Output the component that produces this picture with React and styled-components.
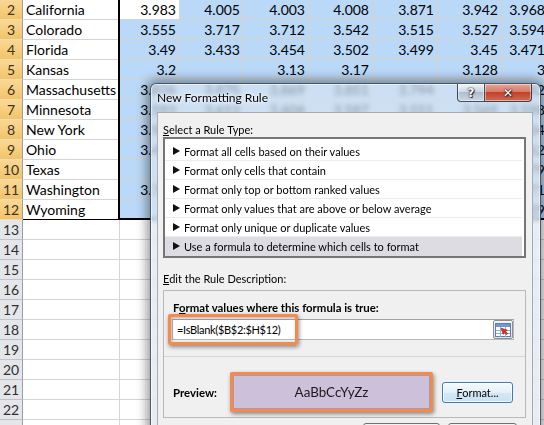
import React from 'react';
import styled, { createGlobalStyle } from 'styled-components';

const GlobalStyle = createGlobalStyle`
  html, body { margin: 0; padding: 0; background: #fff; overflow: hidden; }
  * { box-sizing: border-box; }
`;

const COLS = [97, 60, 64, 65, 64, 65, 64, 47];

const DATA = [
  ['California', '3.983', '4.005', '4.003', '4.008', '3.871', '3.942', '3.968'],
  ['Colorado', '3.555', '3.717', '3.712', '3.542', '3.515', '3.527', '3.594'],
  ['Florida', '3.49', '3.433', '3.454', '3.502', '3.499', '3.45', '3.471'],
  ['Kansas', '3.2', '', '3.13', '3.17', '', '3.128', '3'],
  ['Massachusetts', '3.826', '3.875', '3.869', '3.851', '3.794', '3.813', '3.842'],
  ['Minnesota', '3.592', '3.612', '3.604', '3.587', '3.551', '3.569', '3.598'],
  ['New York', '3.904', '3.961', '3.948', '3.927', '3.889', '3.905', '3.934'],
  ['Ohio', '3.471', '3.488', '3.476', '3.454', '', '3.441', '3.462'],
  ['Texas', '', '3.398', '3.384', '', '3.352', '3.366', '3.379'],
  ['Washington', '3.762', '3.803', '', '3.781', '3.744', '3.756', '3.771'],
  ['Wyoming', '', '3.352', '3.341', '3.327', '', '3.318', '3.339'],
];

const RULES = [
  'Format all cells based on their values',
  'Format only cells that contain',
  'Format only top or bottom ranked values',
  'Format only values that are above or below average',
  'Format only unique or duplicate values',
  'Use a formula to determine which cells to format',
];

const Sheet = styled.div`
  position: relative;
  width: 544px;
  height: 425px;
  overflow: hidden;
  font-family: Lato, "Liberation Sans", sans-serif;
  font-size: 14px;
  color: #000;
`;

const Row = styled.div`
  display: flex;
  height: 20px;
`;

const RowHead = styled.div`
  flex: none;
  width: 23px;
  height: 20px;
  line-height: 19px;
  text-align: center;
  color: ${p => (p.$sel ? '#3b3324' : '#2f2f2f')};
  background: ${p => (p.$sel ? 'linear-gradient(#f9d896, #f2c468)' : '#e4e6ea')};
  border-right: 1px solid #9a9ea6;
  border-bottom: 1px solid ${p => (p.$sel ? '#f4ddad' : '#bfc3c9')};
`;

const Cell = styled.div`
  flex: none;
  width: ${p => p.$w}px;
  height: 20px;
  line-height: 19px;
  padding: 0 3px;
  white-space: nowrap;
  overflow: hidden;
  text-align: ${p => (p.$num ? 'right' : 'left')};
  background: ${p => (p.$sel ? '#bad8f7' : '#fff')};
  border-right: 1px solid ${p => (p.$sel ? '#d8d1c6' : '#d4d4d4')};
  border-bottom: 1px solid ${p => (p.$dark ? '#000' : p.$sel ? '#d8d1c6' : '#d4d4d4')};
`;

const Selection = styled.div`
  position: absolute;
  left: 118px;
  top: -2px;
  width: 460px;
  height: 222px;
  border: 2px solid #000;
  pointer-events: none;
`;

const Dialog = styled.div`
  position: absolute;
  left: 150px;
  top: 83px;
  width: 391px;
  height: 370px;
  display: flex;
  flex-direction: column;
  border: 1px solid rgba(30, 40, 55, 0.75);
  border-radius: 6px 6px 0 0;
  background: linear-gradient(rgba(214, 228, 242, 0.62), rgba(226, 232, 240, 0.78));
  backdrop-filter: blur(2.5px);
  box-shadow: 0 0 11px 3px rgba(0, 0, 0, 0.42), inset 0 0 0 1px rgba(255, 255, 255, 0.55);
  font-family: Lato, "Noto Sans", sans-serif;
  font-size: 11px;
  color: #000;
`;

const TitleBar = styled.div`
  flex: none;
  height: 28px;
  display: flex;
  align-items: flex-start;
  justify-content: space-between;
  padding: 0 8px 0 6px;
`;

const Title = styled.div`
  line-height: 28px;
  font-size: 12px;
  color: #000;
  text-shadow: 0 0 6px rgba(255, 255, 255, 0.9), 0 0 3px rgba(255, 255, 255, 0.9);
`;

const Caption = styled.div`
  display: flex;
  height: 18px;
`;

const CaptionButton = styled.div`
  width: ${p => p.$w}px;
  height: 18px;
  display: flex;
  align-items: center;
  justify-content: center;
  font-family: "DejaVu Sans", sans-serif;
  font-weight: bold;
  font-size: 12px;
  color: #fff;
  border: 1px solid rgba(40, 50, 60, 0.85);
  border-top: none;
  text-shadow: 0 0 1px #222, 0 0 2px #222, 1px 1px 1px #333;
  background: ${p =>
    p.$close
      ? 'linear-gradient(#e9a597, #d57c69 45%, #c4402a 50%, #d06a54)'
      : 'linear-gradient(rgba(255,255,255,0.75), rgba(205,214,224,0.7) 50%, rgba(170,182,196,0.7) 50%, rgba(200,210,222,0.7))'};
  border-radius: ${p => (p.$close ? '0 0 4px 0' : '0 0 0 4px')};
  border-left: ${p => (p.$close ? 'none' : '1px solid rgba(40, 50, 60, 0.85)')};
  box-shadow: inset 0 0 0 1px rgba(255, 255, 255, 0.45);
`;

const Client = styled.div`
  flex: 1;
  margin: 0 7px 0 6px;
  padding: 10px 6px 0 5px;
  background: #f0f0f0;
  border: 1px solid #a7abb2;
  border-bottom: none;
`;

const Label = styled.div`
  height: 14px;
  line-height: 14px;
  margin-top: ${p => p.$mt || 0}px;
`;

const RuleList = styled.div`
  margin-top: 0;
  border: 2px solid #767676;
  background: #fff;
  padding: 3px 2px 0 0;
`;

const RuleItem = styled.div`
  height: 19px;
  display: flex;
  align-items: center;
  gap: 4px;
  padding-left: 8px;
  border-bottom: 1px solid ${p => (p.$last ? 'transparent' : '#ececec')};
  background: ${p => (p.$active ? '#dcdce2' : 'transparent')};
`;

const Arrow = styled.span`
  width: 0;
  height: 0;
  border-left: 7px solid #111;
  border-top: 4px solid transparent;
  border-bottom: 4px solid transparent;
`;

const DescBox = styled.div`
  margin-top: 4px;
  border: 1px solid #b9b9b9;
`;

const DescTop = styled.div`
  padding: 9px 11px 16px 8px;
`;

const BoldLabel = styled.div`
  font-weight: bold;
  font-size: 11.4px;
  line-height: 15px;
  padding-left: ${p => p.$pl || 0}px;
  width: ${p => (p.$w ? `${p.$w}px` : 'auto')};
  flex: none;
`;

const FormulaRow = styled.div`
  position: relative;
  margin-top: 4px;
  height: 21px;
  display: flex;
  align-items: center;
  background: #fff;
  border: 1px solid #b4b8bf;
  border-top-color: #9da2a9;
`;

const FormulaText = styled.div`
  flex: 1;
  padding-left: 4px;
  line-height: 19px;
  font-size: 11px;
  letter-spacing: -0.3px;
`;

const RangeButton = styled.div`
  flex: none;
  width: 20px;
  height: 19px;
  display: flex;
  align-items: center;
  justify-content: center;
  border: 1px solid #8e8f8f;
  border-radius: 2px;
  background: linear-gradient(#f6f6f6, #dedede);
`;

const Highlight = styled.div`
  position: absolute;
  left: ${p => p.$x}px;
  top: ${p => p.$y}px;
  width: ${p => p.$w}px;
  height: ${p => p.$h}px;
  border: 3px solid #f58a4a;
  border-radius: 2px;
  box-shadow: 1px 2px 4px rgba(0, 0, 0, 0.45), inset 1px 1px 3px rgba(0, 0, 0, 0.25);
  pointer-events: none;
`;

const DescBottom = styled.div`
  border-top: 1px solid #d6d6d6;
  padding: 15px 0 5px 9px;
  display: flex;
  align-items: center;
`;

const PreviewBox = styled.div`
  flex: none;
  width: 203px;
  height: 40px;
  border: 3px solid #f58a4a;
  border-radius: 2px;
  background: #ccc0db;
  box-shadow: 1px 2px 4px rgba(0, 0, 0, 0.45), inset 0 0 0 1px #a49cae;
  display: flex;
  align-items: center;
  justify-content: center;
  font-family: Lato, "Liberation Sans", sans-serif;
  font-size: 13.4px;
  color: #1a1a1a;
`;

const FormatButton = styled.div`
  flex: none;
  margin-left: 9px;
  width: 71px;
  height: 21px;
  line-height: 19px;
  text-align: center;
  border: 1px solid #3c7fb1;
  border-radius: 3px;
  background: linear-gradient(#f4fafd, #e3f0f8 50%, #d3e7f4 50%, #c9e2f2);
  box-shadow: inset 0 0 0 1px rgba(255, 255, 255, 0.7);
`;

const ButtonRow = styled.div`
  display: flex;
  justify-content: flex-end;
  gap: 8px;
  margin-top: 5px;
  padding-right: 9px;
`;

const PushButton = styled.div`
  width: ${p => p.$w}px;
  height: 23px;
  line-height: 21px;
  text-align: center;
  border: 1px solid #707070;
  border-radius: 3px;
  background: linear-gradient(#f2f2f2, #ebebeb 50%, #dddddd 50%, #cfcfcf);
`;

const RangeIcon = () => (
  <svg width="16" height="14" viewBox="0 0 16 14">
    <rect x="0.5" y="0.5" width="15" height="13" fill="#fff" stroke="#5a7fb0" />
    <rect x="1" y="1" width="14" height="3" fill="#6d9ad3" />
    <path d="M1 7.5h14M1 10.5h14M5.5 4v10M10.5 4v10" stroke="#8fb0d8" strokeWidth="1" />
    <path d="M6 5 L12.5 7.2 L10.4 8.2 L12.8 10.6 L11.6 11.8 L9.2 9.4 L8.2 11.5 Z" fill="#e0301e" stroke="#a01808" strokeWidth="0.5" />
  </svg>
);

export default function App() {
  const blank = Array.from({ length: 11 }, (_, i) => i + 13);
  return (
    <Sheet>
      <GlobalStyle />
      {DATA.map((r, i) => (
        <Row key={i}>
          <RowHead $sel>{i + 2}</RowHead>
          {r.map((v, j) => (
            <Cell
              key={j}
              $w={COLS[j]}
              $num={j > 0}
              $sel={j > 0 && !(i === 0 && j === 1)}
              $dark={i === DATA.length - 1 && j === 0}
            >
              {v}
            </Cell>
          ))}
        </Row>
      ))}
      {blank.map(n => (
        <Row key={n}>
          <RowHead>{n}</RowHead>
          {COLS.map((w, j) => (
            <Cell key={j} $w={w} />
          ))}
        </Row>
      ))}
      <Selection />

      <Dialog>
        <TitleBar>
          <Title>New Formatting Rule</Title>
          <Caption>
            <CaptionButton $w={28}>?</CaptionButton>
            <CaptionButton $w={47} $close>✕</CaptionButton>
          </Caption>
        </TitleBar>
        <Client>
          <Label><u>S</u>elect a Rule Type:</Label>
          <RuleList>
            {RULES.map((t, i) => (
              <RuleItem key={t} $active={i === RULES.length - 1} $last={i === RULES.length - 1}>
                <Arrow />
                <span>{t}</span>
              </RuleItem>
            ))}
          </RuleList>
          <Label $mt={14}><u>E</u>dit the Rule Description:</Label>
          <DescBox>
            <DescTop>
              <BoldLabel $pl={1}>F<u>o</u>rmat values where this formula is true:</BoldLabel>
              <FormulaRow>
                <FormulaText>=IsBlank($B$2:$H$12)</FormulaText>
                <RangeButton><RangeIcon /></RangeButton>
                <Highlight $x={-5} $y={-6} $w={130} $h={31} />
              </FormulaRow>
            </DescTop>
            <DescBottom>
              <BoldLabel $w={57}>Preview:</BoldLabel>
              <PreviewBox>AaBbCcYyZz</PreviewBox>
              <FormatButton><u>F</u>ormat...</FormatButton>
            </DescBottom>
          </DescBox>
          <ButtonRow>
            <PushButton $w={77}>OK</PushButton>
            <PushButton $w={69}>Cancel</PushButton>
          </ButtonRow>
        </Client>
      </Dialog>
    </Sheet>
  );
}
